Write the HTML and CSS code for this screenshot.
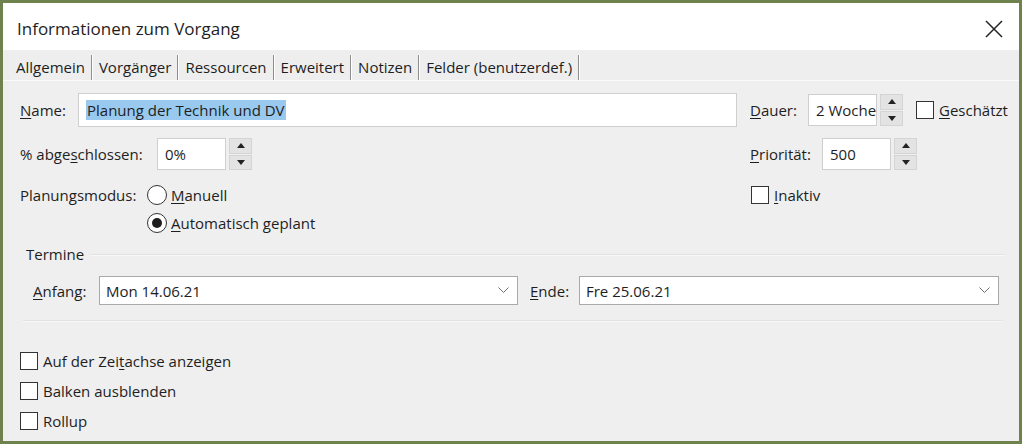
FILE: index.html
```html
<!DOCTYPE html>
<html lang="de">
<head>
    <meta charset="UTF-8">
    <title>Informationen zum Vorgang</title>
    <link rel="stylesheet" href="styles.css">
</head>
<body>
    <div class="window">
        <div class="titlebar">
            <span class="title">Informationen zum Vorgang</span>
            <svg class="close" width="18" height="18" viewBox="0 0 18 18">
                <path d="M1 1 L17 17 M17 1 L1 17" stroke="#222" stroke-width="1.5" fill="none"/>
            </svg>
        </div>

        <div class="tabs">
            <span class="tab active">Allgemein</span>
            <span class="tab">Vorgänger</span>
            <span class="tab">Ressourcen</span>
            <span class="tab">Erweitert</span>
            <span class="tab">Notizen</span>
            <span class="tab">Felder (benutzerdef.)</span>
        </div>

        <div class="panel">
            <!-- Name / Dauer -->
            <div class="row row-name">
                <div class="col-left">
                    <label class="lbl lbl-name"><u>N</u>ame:</label>
                    <div class="field field-name"><span class="sel">Planung der Technik und DV</span></div>
                </div>
                <div class="col-right">
                    <label class="lbl lbl-dauer"><u>D</u>auer:</label>
                    <div class="field field-small">2 Woche</div>
                    <div class="spin"><span class="up"></span><span class="down"></span></div>
                    <span class="check check-geschaetzt"></span>
                    <span class="check-text"><u>G</u>eschätzt</span>
                </div>
            </div>

            <!-- % abgeschlossen / Priorität -->
            <div class="row row-percent">
                <div class="col-left">
                    <label class="lbl lbl-percent">% abge<u>s</u>chlossen:</label>
                    <div class="field field-small">0%</div>
                    <div class="spin"><span class="up"></span><span class="down"></span></div>
                </div>
                <div class="col-right">
                    <label class="lbl lbl-prio"><u>P</u>riorität:</label>
                    <div class="field field-small">500</div>
                    <div class="spin"><span class="up"></span><span class="down"></span></div>
                </div>
            </div>

            <!-- Planungsmodus / Inaktiv -->
            <div class="row row-mode">
                <div class="col-left">
                    <label class="lbl lbl-mode">Planungsmodus:</label>
                    <span class="radio"></span>
                    <span class="radio-text"><u>M</u>anuell</span>
                </div>
                <div class="col-right">
                    <span class="check check-inaktiv"></span>
                    <span class="check-text"><u>I</u>naktiv</span>
                </div>
            </div>

            <div class="row row-auto">
                <span class="radio checked"></span>
                <span class="radio-text"><u>A</u>utomatisch geplant</span>
            </div>

            <div class="group-head">
                <span class="group-title">Termine</span>
                <span class="group-line"></span>
            </div>

            <div class="row row-dates">
                <label class="lbl lbl-anfang"><u>A</u>nfang:</label>
                <div class="combo combo-anfang">
                    <span>Mon 14.06.21</span>
                    <svg class="chev" width="11" height="7" viewBox="0 0 11 7"><path d="M0.5 0.5 L5.5 5.5 L10.5 0.5" stroke="#6f6f6f" fill="none"/></svg>
                </div>
                <label class="lbl lbl-ende"><u>E</u>nde:</label>
                <div class="combo combo-ende">
                    <span>Fre 25.06.21</span>
                    <svg class="chev" width="11" height="7" viewBox="0 0 11 7"><path d="M0.5 0.5 L5.5 5.5 L10.5 0.5" stroke="#6f6f6f" fill="none"/></svg>
                </div>
            </div>

            <div class="separator"></div>

            <div class="options">
                <div class="option"><span class="check"></span><span class="check-text">Auf der Zei<u>t</u>achse anzeigen</span></div>
                <div class="option"><span class="check"></span><span class="check-text">Balken ausblenden</span></div>
                <div class="option"><span class="check"></span><span class="check-text">Rollup</span></div>
            </div>
        </div>
    </div>
</body>
</html>
```

FILE: styles.css
```css
body {
    margin: 0;
    background: #ffffff;
    font-family: "Open Sans", "Noto Sans", sans-serif;
    font-size: 15px;
    color: #1e1e1e;
}

u {
    text-decoration-thickness: 1px;
    text-underline-offset: 2px;
}

.window {
    box-sizing: border-box;
    width: 1022px;
    height: 444px;
    border: 3px solid #6f824e;
    background: #efefef;
    display: flex;
    flex-direction: column;
}

/* Titelleiste */
.titlebar {
    height: 47px;
    flex-shrink: 0;
    background: #ffffff;
    display: flex;
    align-items: center;
    padding: 4px 16px 0 14px;
    box-sizing: border-box;
}

.title {
    font-size: 17px;
    flex: 1;
}

/* Reiter */
.tabs {
    height: 30px;
    flex-shrink: 0;
    background: #eeeeee;
    border-bottom: 1px solid #fafafa;
    display: flex;
    align-items: flex-end;
    padding-left: 13px;
}

.tab {
    padding: 0 6px 0 6px;
    height: 25px;
    line-height: 24px;
    border-right: 1px solid #8f8f8f;
    box-shadow: 1px 0 0 #ffffff;
    margin-right: 1px;
}

.tab.active {
    padding-left: 0;
}

/* Inhalt */
.panel {
    flex: 1;
    padding: 12px 10px 0 17px;
    display: flex;
    flex-direction: column;
}

.row {
    display: flex;
    align-items: center;
}

.col-left {
    width: 730px;
    flex-shrink: 0;
    display: flex;
    align-items: center;
}

.col-right {
    flex: 1;
    display: flex;
    align-items: center;
    white-space: nowrap;
}

.lbl {
    white-space: nowrap;
}

.field {
    box-sizing: border-box;
    background: #ffffff;
    border: 1px solid #cfcfcf;
    height: 32px;
    display: flex;
    align-items: center;
    padding-left: 7px;
    overflow: hidden;
    white-space: nowrap;
    flex-shrink: 0;
}

.sel {
    background: #99c9ef;
    padding: 0 1px;
}

.lbl-name {
    width: 58px;
}

.field-name {
    flex: 1;
    height: 34px;
    margin-right: 13px;
}

.lbl-dauer {
    width: 58px;
}

.field-small {
    width: 69px;
}

.spin {
    display: flex;
    flex-direction: column;
    flex-shrink: 0;
    width: 23px;
    height: 32px;
    margin-left: 3px;
    gap: 1px;
}

.spin span {
    flex: 1;
    background: #e3e3e3;
    border: 1px solid #d4d4d4;
    display: flex;
    align-items: center;
    justify-content: center;
}

.spin .up::after {
    content: "";
    border-left: 4px solid transparent;
    border-right: 4px solid transparent;
    border-bottom: 5px solid #222;
}

.spin .down::after {
    content: "";
    border-left: 4px solid transparent;
    border-right: 4px solid transparent;
    border-top: 5px solid #222;
}

.check {
    box-sizing: border-box;
    width: 18px;
    height: 18px;
    border: 1px solid #333;
    background: #ffffff;
    flex-shrink: 0;
}

.check-geschaetzt {
    margin-left: 13px;
}

.check-inaktiv {
    margin-left: 1px;
}

.check-text {
    margin-left: 5px;
}

.row-percent {
    margin-top: 11px;
}

.lbl-percent {
    width: 137px;
}

.lbl-prio {
    width: 72px;
}

.row-mode {
    margin-top: 15px;
}

.lbl-mode {
    width: 127px;
}

.radio {
    box-sizing: border-box;
    width: 20px;
    height: 20px;
    border-radius: 50%;
    border: 1px solid #333;
    background: #ffffff;
    flex-shrink: 0;
    position: relative;
}

.radio.checked::after {
    content: "";
    position: absolute;
    left: 4px;
    top: 4px;
    width: 10px;
    height: 10px;
    border-radius: 50%;
    background: #1e1e1e;
}

.radio-text {
    margin-left: 4px;
}

.row-auto {
    margin-top: 8px;
    padding-left: 127px;
}

/* Termine */
.group-head {
    display: flex;
    align-items: center;
    margin-top: 11px;
    padding-left: 6px;
    margin-right: 4px;
}

.group-line {
    flex: 1;
    height: 1px;
    background: #e2e2e2;
    box-shadow: 0 1px 0 #f8f8f8;
    margin-left: 6px;
}

.row-dates {
    margin-top: 12px;
    padding-left: 13px;
}

.lbl-anfang {
    width: 66px;
}

.combo {
    box-sizing: border-box;
    height: 29px;
    background: #ffffff;
    border: 1px solid #a9a9a9;
    display: flex;
    align-items: center;
    justify-content: space-between;
    padding: 0 8px 0 6px;
    flex-shrink: 0;
}

.combo-anfang {
    width: 419px;
}

.lbl-ende {
    margin-left: 12px;
    width: 49px;
}

.combo-ende {
    width: 420px;
}

.separator {
    height: 1px;
    background: #e2e2e2;
    box-shadow: 0 1px 0 #f8f8f8;
    margin: 15px 6px 0 3px;
}

.options {
    margin-top: 30px;
    display: flex;
    flex-direction: column;
    gap: 10px;
}

.option {
    display: flex;
    align-items: center;
}
```
